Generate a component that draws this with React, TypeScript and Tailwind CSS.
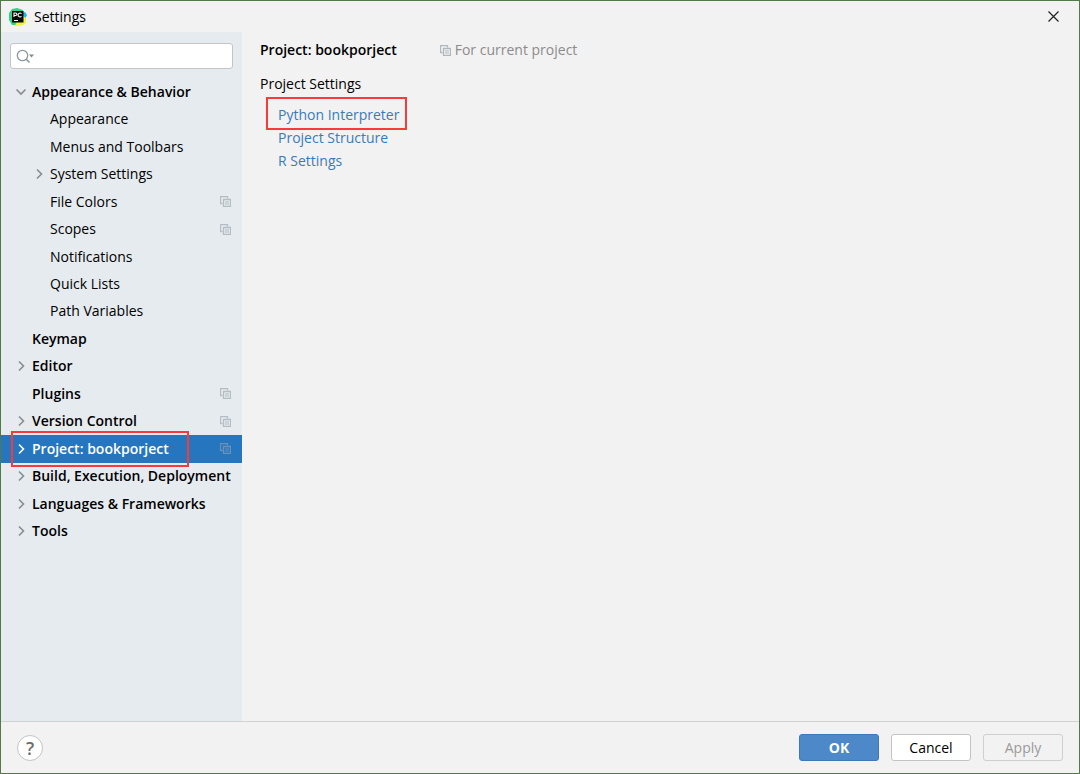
import clsx from "clsx";

type TreeItem = {
  label: string;
  child?: boolean;
  arrow?: "right" | "down";
  projectLevel?: boolean;
  selected?: boolean;
};

const treeItems: TreeItem[] = [
  { label: "Appearance & Behavior", arrow: "down" },
  { label: "Appearance", child: true },
  { label: "Menus and Toolbars", child: true },
  { label: "System Settings", child: true, arrow: "right" },
  { label: "File Colors", child: true, projectLevel: true },
  { label: "Scopes", child: true, projectLevel: true },
  { label: "Notifications", child: true },
  { label: "Quick Lists", child: true },
  { label: "Path Variables", child: true },
  { label: "Keymap" },
  { label: "Editor", arrow: "right" },
  { label: "Plugins", projectLevel: true },
  { label: "Version Control", arrow: "right", projectLevel: true },
  {
    label: "Project: bookporject",
    arrow: "right",
    projectLevel: true,
    selected: true,
  },
  { label: "Build, Execution, Deployment", arrow: "right" },
  { label: "Languages & Frameworks", arrow: "right" },
  { label: "Tools", arrow: "right" },
];

function PyCharmLogo() {
  return (
    <svg width="18" height="18" viewBox="0 0 18 18" aria-hidden="true">
      <path d="M0 5 3 1l5-1 6 2 1 6-7 9-5 0-3-5z" fill="#2fd58a" />
      <path d="m13 5 3-1 2 3-2 4-4-2z" fill="#07c3f2" />
      <path d="m14 8 3 2 0 5-4 2.500-7 .5 2-5z" fill="#f4f33c" />
      <path d="M3 3h11.500v11.500H3z" fill="#080808" />
      <path
        d="M5 9V5h1.600a1.200 1.200 0 0 1 0 2.500H5M12.500 5.600a2 2 0 1 0 0 2.800M5 12.500h4"
        fill="none"
        stroke="#fff"
        strokeWidth="1.1"
      />
    </svg>
  );
}

function CopyIcon() {
  return (
    <svg
      width="11"
      height="11"
      viewBox="0 0 11 11"
      fill="none"
      stroke="currentColor"
      className="shrink-0"
      aria-hidden="true"
    >
      <path d="M2.5 7.5h-2v-7h7v2" strokeWidth="1.3" />
      <path d="M3.5 3.5h7v7h-7z" strokeWidth="1.3" />
      <path d="M5 6h4M5 8h4" />
    </svg>
  );
}

function Arrow({ direction }: { direction: "right" | "down" }) {
  return (
    <svg
      width="12"
      height="12"
      viewBox="0 0 12 12"
      fill="none"
      stroke="currentColor"
      strokeWidth="1.6"
      aria-hidden="true"
    >
      <path
        d={direction === "down" ? "M1.5 3.5 6 8l4.5-4.5" : "M4 1.5 8.5 6 4 10.5"}
      />
    </svg>
  );
}

function TreeRow({ label, child, arrow, projectLevel, selected }: TreeItem) {
  return (
    <li
      className={clsx(
        "flex items-center pr-[11px]",
        child ? "pl-8" : "pl-3.5",
        !child && "font-semibold",
        selected && "bg-[#2675bf] text-white",
      )}
    >
      <button
        type="button"
        className="relative flex min-w-0 flex-1 items-center whitespace-nowrap text-left"
      >
        <span
          className={clsx(
            "w-[17px] shrink-0",
            selected ? "text-white" : "text-[#888c90]",
          )}
        >
          {arrow && <Arrow direction={arrow} />}
        </span>
        {label}
        {selected && (
          <span className="pointer-events-none absolute -inset-y-2 -left-1 w-[178px] border-2 border-[#f93a3a]" />
        )}
      </button>
      {projectLevel && (
        <span className={selected ? "text-[#6b93b8]" : "text-[#b4bdc3]"}>
          <CopyIcon />
        </span>
      )}
    </li>
  );
}

function Sidebar() {
  return (
    <aside className="w-[241px] shrink-0 bg-[#e6ebef] pt-[11px]">
      <div className="relative mx-[9px]">
        <input
          type="text"
          aria-label="Search settings"
          className="block h-[26px] w-full rounded-[3px] border border-[#c4c4c4] bg-white pl-7 outline-none"
        />
        <svg
          width="19"
          height="15"
          viewBox="0 0 19 15"
          fill="none"
          className="pointer-events-none absolute left-1.5 top-1.5"
          aria-hidden="true"
        >
          <circle cx="6.5" cy="6.5" r="5.2" stroke="#8e999f" strokeWidth="1.3" />
          <path d="m10 10 3.5 3.5" stroke="#8e999f" strokeWidth="1.6" />
          <path d="M13 5.5h5L15.5 8.5z" fill="#7f8b91" />
        </svg>
      </div>
      <ul className="mt-[9px] grid h-[467px] auto-rows-fr grid-cols-1">
        {treeItems.map((item) => (
          <TreeRow key={item.label} {...item} />
        ))}
      </ul>
    </aside>
  );
}

function ProjectPage() {
  return (
    <main className="flex-1 pl-[18px] pt-2">
      <div className="flex items-center gap-[43px]">
        <h1 className="font-semibold">Project: bookporject</h1>
        <div className="flex items-center gap-1 text-[#8c8c8c]">
          <span className="text-[#b0b7bb]">
            <CopyIcon />
          </span>
          For current project
        </div>
      </div>
      <h2 className="mt-3.5">Project Settings</h2>
      <ul className="mt-[9px] pl-[18px] leading-[23px] text-[#3a7bba]">
        <li>
          <a href="#interpreter" className="relative">
            Python Interpreter
            <span className="pointer-events-none absolute -bottom-1.5 -left-3 -right-2 -top-2 border-2 border-[#f93a3a]" />
          </a>
        </li>
        <li>
          <a href="#structure">Project Structure</a>
        </li>
        <li>
          <a href="#r-settings">R Settings</a>
        </li>
      </ul>
    </main>
  );
}

function Footer() {
  const buttonClass = "h-[27px] w-20 rounded-[3px] border";

  return (
    <footer className="flex h-[52px] items-center border-t border-[#d1d1d1] px-4">
      <button
        type="button"
        aria-label="Help"
        className="h-[26px] w-[26px] rounded-full border border-[#c4c4c4] bg-white text-lg leading-6 font-semibold text-[#6e6e6e]"
      >
        ?
      </button>
      <div className="ml-auto flex gap-3">
        <button
          type="button"
          className={clsx(
            buttonClass,
            "border-[#4178b4] bg-[#4d89c9] font-bold text-white",
          )}
        >
          OK
        </button>
        <button
          type="button"
          className={clsx(buttonClass, "border-[#c4c4c4] bg-white")}
        >
          Cancel
        </button>
        <button
          type="button"
          disabled
          className={clsx(buttonClass, "border-[#cfcfcf] text-[#9a9a9a]")}
        >
          Apply
        </button>
      </div>
    </footer>
  );
}

export default function App() {
  return (
    <div className="flex min-h-screen flex-col border border-[#527a48] bg-[#f2f2f2] font-['Open_Sans',sans-serif] text-sm text-black">
      <header className="flex h-[31px] items-center pl-2 pr-5">
        <PyCharmLogo />
        <span className="ml-[7px]">Settings</span>
        <button type="button" aria-label="Close" className="ml-auto">
          <svg width="11" height="11" viewBox="0 0 11 11" aria-hidden="true">
            <path d="m.5.5 10 10m0-10-10 10" stroke="#222" strokeWidth="1.2" />
          </svg>
        </button>
      </header>
      <div className="flex flex-1">
        <Sidebar />
        <ProjectPage />
      </div>
      <Footer />
    </div>
  );
}
